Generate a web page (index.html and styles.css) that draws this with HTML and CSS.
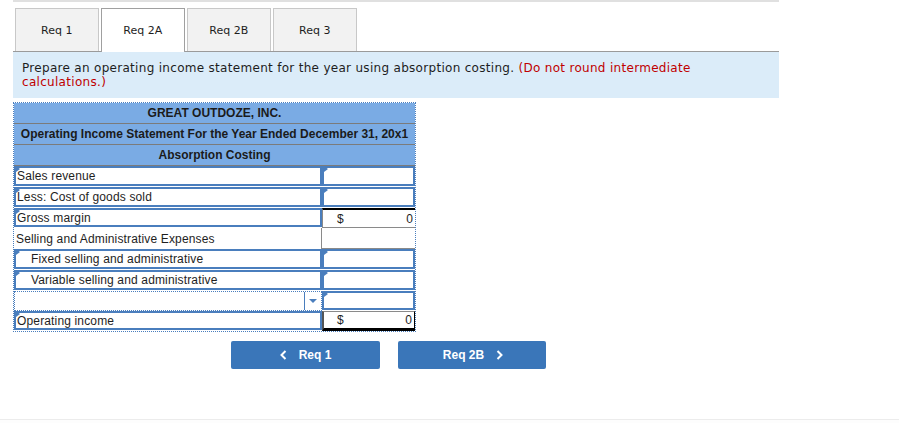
FILE: index.html
```html
<!DOCTYPE html>
<html>
<head>
<meta charset="utf-8">
<link rel="stylesheet" href="styles.css">
</head>
<body>
<div class="page">
  <div class="topline"></div>
  <div class="tabs">
    <div class="tab">Req 1</div>
    <div class="tab active">Req 2A</div>
    <div class="tab">Req 2B</div>
    <div class="tab">Req 3</div>
    <div class="tabfill"></div>
  </div>
  <div class="band">
    <p class="prompt">Prepare an operating income statement for the year using absorption costing. <span class="red">(Do not round intermediate</span><br><span class="red">calculations.)</span></p>
  </div>
  <div class="sheet">
    <div class="hrow">GREAT OUTDOZE, INC.</div>
    <div class="hrow">Operating Income Statement For the Year Ended December 31, 20x1</div>
    <div class="hrow">Absorption Costing</div>

    <div class="row">
      <div class="cell lab inp"><span class="flag"></span>Sales revenue</div>
      <div class="cell val inp"><span class="flag"></span></div>
    </div>
    <div class="row">
      <div class="cell lab inp"><span class="flag"></span>Less: Cost of goods sold</div>
      <div class="cell val inp"><span class="flag"></span></div>
    </div>
    <div class="row short">
      <div class="cell lab inp"><span class="flag"></span>Gross margin</div>
      <div class="cell val total"><span class="dollar">$</span><span class="num">0</span></div>
    </div>
    <div class="row">
      <div class="cell lab plain">Selling and Administrative Expenses</div>
      <div class="cell val plainv"></div>
    </div>
    <div class="row">
      <div class="cell lab inp indent"><span class="flag"></span>Fixed selling and administrative</div>
      <div class="cell val inp"><span class="flag"></span></div>
    </div>
    <div class="row">
      <div class="cell lab inp indent"><span class="flag"></span>Variable selling and administrative</div>
      <div class="cell val inp"><span class="flag"></span></div>
    </div>
    <div class="row short">
      <div class="cell lab select"><span class="selspace"></span><span class="selbtn"><span class="arrow"></span></span></div>
      <div class="cell val inp"><span class="flag"></span></div>
    </div>
    <div class="row short">
      <div class="cell lab inp"><span class="flag"></span>Operating income</div>
      <div class="cell val final"><span class="dollar">$</span><span class="num">0</span></div>
    </div>
  </div>
  <div class="navs">
    <div class="btn b1">
      <svg class="chev" width="7" height="10" viewBox="0 0 7 10"><polyline points="5.5,1 1.5,5 5.5,9" fill="none" stroke="#fff" stroke-width="2"/></svg>
      <span>Req 1</span>
    </div>
    <div class="btn b2">
      <span>Req 2B</span>
      <svg class="chev" width="7" height="10" viewBox="0 0 7 10"><polyline points="1.5,1 5.5,5 1.5,9" fill="none" stroke="#fff" stroke-width="2"/></svg>
    </div>
  </div>
</div>
<div class="footer"></div>
</body>
</html>
```

FILE: styles.css
```css
html, body {
  margin: 0;
  padding: 0;
  background: #fff;
}

.page {
  padding-left: 13px;
  width: 766px;
}

.topline {
  height: 2px;
  background: #e0e0e0;
}

.tabs {
  display: flex;
  margin-top: 6px;
  padding-left: 2px;
  gap: 2.5px;
  border-bottom: 1px solid #9a9a9a;
  height: 43px;
}

.tab {
  box-sizing: border-box;
  width: 83.5px;
  height: 43px;
  background: #f2f2f2;
  border: 1px solid #c8c8c8;
  border-bottom: none;
  display: flex;
  align-items: center;
  justify-content: center;
  font-family: "DejaVu Sans", Verdana, sans-serif;
  font-size: 11px;
  color: #1e1e1e;
}

.tab.active {
  background: #fff;
  border-color: #a0a0a0;
  height: 44px;
  margin-bottom: -1px;
}

.tabfill {
  flex: 1;
}

.band {
  background: #dbecf9;
  height: 46px;
  box-sizing: border-box;
  padding: 9px 60px 0 9px;
}

.prompt {
  margin: 0;
  font-family: "DejaVu Sans", Verdana, sans-serif;
  font-size: 12px;
  line-height: 14px;
  letter-spacing: 0.3px;
  color: #1e1e1e;
}

.red {
  color: #c00000;
}

.sheet {
  margin-top: 4px;
  width: 403px;
  box-sizing: border-box;
  border: 1px dotted #4a7ebd;
  font-family: "Liberation Sans", Arial, sans-serif;
  font-size: 12px;
  color: #1e1e1e;
}

.hrow {
  height: 20px;
  line-height: 20px;
  background: #7aabe4;
  border-bottom: 1px solid #7b7b7b;
  text-align: center;
  font-weight: bold;
  color: #1b1b1b;
}

.row {
  display: flex;
  height: 21px;
}

.row.short {
  height: 20px;
}

.cell {
  box-sizing: border-box;
  position: relative;
  display: flex;
  align-items: center;
  white-space: nowrap;
  letter-spacing: 0.15px;
}

.lab {
  width: 308px;
  padding-left: 1px;
}

.val {
  width: 93px;
}

.inp {
  border: 2px solid #4a7ebd;
  height: calc(100% - 1px);
}

.indent {
  padding-left: 15px;
}

.flag {
  position: absolute;
  left: 0;
  top: -2px;
  width: 0;
  height: 0;
  border-left: 4px solid #4a7ebd;
  border-top: 3px solid transparent;
  border-bottom: 3px solid transparent;
}

.plain {
  border-right: 1px solid #8a8a8a;
  padding-left: 2px;
}

.lab.plain {
  width: 308px;
}

.plainv {
  border-bottom: 1px solid #8a8a8a;
}

.total {
  border-top: 2px solid #000;
  border-left: 1px solid #8a8a8a;
  border-bottom: 1px solid #8a8a8a;
  justify-content: space-between;
  padding: 0 2px 0 14px;
}

.final {
  border-top: 1px solid #8a8a8a;
  border-left: 2px solid #555;
  border-right: 1px solid #000;
  border-bottom: 3px solid #000;
  justify-content: space-between;
  padding: 0 2px 0 13px;
}

.select {
  border: 1px dotted #4a7ebd;
  height: 100%;
  padding: 0;
  align-items: stretch;
}

.selspace {
  flex: 1;
}

.selbtn {
  width: 16px;
  border-left: 1px solid #4a7ebd;
  display: flex;
  align-items: center;
  justify-content: center;
}

.arrow {
  width: 0;
  height: 0;
  border-top: 4px solid #4a7ebd;
  border-left: 4px solid transparent;
  border-right: 4px solid transparent;
}

.navs {
  display: flex;
  gap: 18px;
  margin-top: 9px;
  padding-left: 218px;
}

.btn {
  box-sizing: border-box;
  height: 28px;
  background: #3a76b9;
  border-radius: 2px;
  display: flex;
  align-items: center;
  justify-content: center;
  gap: 12px;
  color: #fff;
  font-family: "Liberation Sans", Arial, sans-serif;
  font-weight: bold;
  font-size: 12px;
}

.b1 {
  width: 149px;
}

.b2 {
  width: 148px;
  padding-left: 2px;
}

.footer {
  margin-top: 50px;
  border-top: 1px solid #ececec;
  height: 4px;
  background: #fdfdfd;
}
```
